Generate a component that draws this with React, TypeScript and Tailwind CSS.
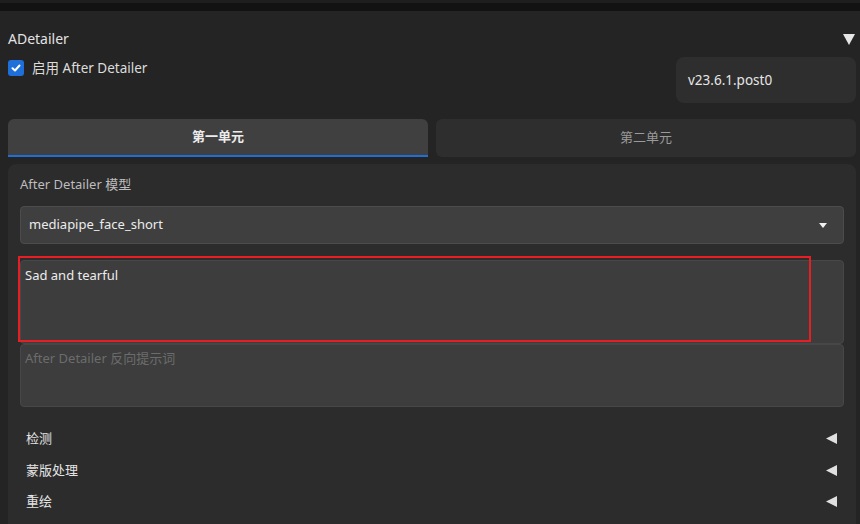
import React from "react";

const font = { fontFamily: '"Noto Sans", "Noto Sans CJK SC", sans-serif' };

function Caret({ dir }: { dir: "down" | "left" }) {
  if (dir === "down")
    return (
      <svg width="12" height="11" viewBox="0 0 12 11">
        <polygon points="0,0 12,0 6,11" fill="#e6e6e6" />
      </svg>
    );
  return (
    <svg width="11" height="11" viewBox="0 0 11 11">
      <polygon points="11,0 11,11 0,5.5" fill="#e0e0e0" />
    </svg>
  );
}

export default function App() {
  return (
    <div
      className="w-[860px] h-[524px] bg-[#242424] overflow-hidden relative text-[14px] text-[#e6e6e6]"
      style={font}
    >
      <div className="h-[3px] bg-[#1e1e1e]" />
      <div className="h-[8px] bg-[#121212]" />

      <div className="flex items-center justify-between pl-2 pr-[5px] pt-[18px] h-[38px]">
        <span className="leading-5 text-[#e2e2e2]">ADetailer</span>
        <Caret dir="down" />
      </div>

      <div className="flex justify-between items-start pl-2 pr-1 mt-[8px]">
        <label className="flex items-center gap-2 mt-[1px]">
          <span className="w-4 h-4 rounded-[3px] bg-[#1e6fd9] flex items-center justify-center">
            <svg width="10" height="10" viewBox="0 0 10 10">
              <path d="M1.5 5.2 L4 7.5 L8.5 2.5" stroke="#fff" strokeWidth="2" fill="none" strokeLinecap="round" strokeLinejoin="round" />
            </svg>
          </span>
          <span className="leading-5 text-[#dcdcdc] text-[13.5px]">启用 After Detailer</span>
        </label>
        <div className="w-[180px] h-[46px] rounded-lg bg-[#2e2e2e] flex items-center pl-3 text-[#e6e6e6] text-[13.5px]">
          v23.6.1.post0
        </div>
      </div>

      <div className="flex gap-2 pl-2 pr-1 mt-[16px]">
        <div className="flex-1 h-[38px] rounded-t-md bg-[#404040] border-b-2 border-[#1f6fd6] flex items-center justify-center font-bold text-[#ececec] text-[13px]">
          第一单元
        </div>
        <div className="flex-1 h-[38px] rounded-md bg-[#2e2e2e] flex items-center justify-center text-[#9a9a9a] text-[13px]">
          第二单元
        </div>
      </div>

      <div className="ml-2 mr-1 mt-[7px] bg-[#2c2c2c] rounded-t-lg px-3 pt-[10px] h-[400px]">
        <div className="leading-5 text-[#bdbdbd] text-[13px]">After Detailer 模型</div>
        <div className="mt-[12px] h-[38px] rounded bg-[#3f3f3f] border border-[#4c4c4c] flex items-center justify-between pl-2 pr-4">
          <span className="text-[#ececec] text-[13px]">mediapipe_face_short</span>
          <svg width="8" height="5" viewBox="0 0 8 5">
            <polygon points="0,0 8,0 4,5" fill="#f0f0f0" />
          </svg>
        </div>
        <div className="mt-[16px] h-[84px] rounded bg-[#3d3d3d] border border-[#474747] px-1 pt-[4px] text-[13px] leading-5 text-[#ececec]">
          Sad and tearful
        </div>
        <div className="mt-0 h-[63px] rounded bg-[#3d3d3d] border border-[#474747] px-1 pt-[3px] text-[13px] leading-5 text-[#6c6c6c]">
          After Detailer 反向提示词
        </div>
        <div className="mt-[16px] flex flex-col pl-[6px] pr-[7px]">
          {["检测", "蒙版处理", "重绘"].map((t) => (
            <div key={t} className="h-[31.5px] flex items-center justify-between">
              <span className="text-[13px] text-[#e4e4e4]">{t}</span>
              <Caret dir="left" />
            </div>
          ))}
        </div>
      </div>

      <div className="absolute left-[18px] top-[256px] w-[793px] h-[86px] border-2 border-[#e81e25]" />
    </div>
  );
}
